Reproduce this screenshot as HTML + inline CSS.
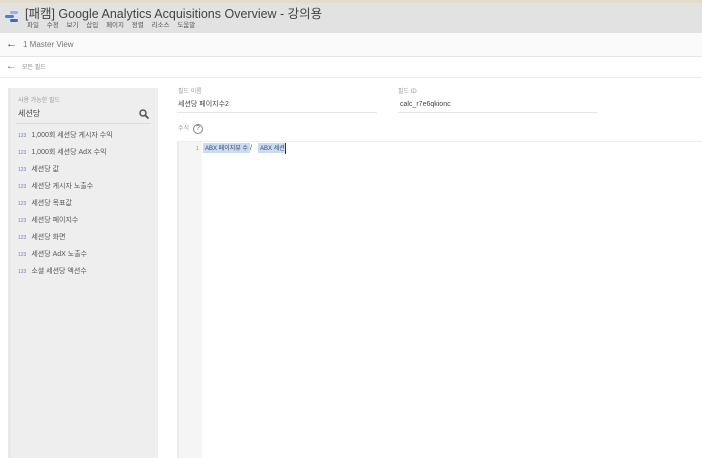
<!DOCTYPE html>
<html><head><meta charset="utf-8"><style>
*{margin:0;padding:0;box-sizing:border-box}
body{width:702px;height:458px;overflow:hidden;background:#fff;font-family:"Liberation Sans","Noto Sans CJK KR",sans-serif;position:relative;color:#333}
.a{position:absolute;white-space:nowrap;line-height:1}
.f{font-size:7px;color:#555}
.f b{font-weight:normal;color:#6b7fc0;font-size:5px;margin-right:5px}
</style></head><body>
<div class="a" style="left:0;top:0;width:702px;height:3px;background:#e4dccb"></div>
<div class="a" style="left:0;top:3px;width:702px;height:30px;background:#e2e2e2"></div>
<svg class="a" style="left:5px;top:11px" width="14" height="12"><rect x="5" y="0" width="8" height="3" rx="1.5" fill="#8ab4f8"/><rect x="0" y="4" width="9" height="3" rx="1.5" fill="#4a7ed8"/><rect x="5" y="8" width="8" height="3" rx="1.5" fill="#3b6cc4"/></svg>
<div class="a" style="left:25px;top:8px;font-size:12.5px;color:#444">[패캠] Google Analytics Acquisitions Overview - 강의용</div>
<div class="a" style="left:27px;top:23px;font-size:6.5px;color:#555;word-spacing:6px">파일 수정 보기 삽입 페이지 정렬 리소스 도움말</div>
<div class="a" style="left:628px;top:32px;font-size:8px;color:#888">····</div>
<div class="a" style="left:0;top:33px;width:702px;height:24px;background:#fafafa;border-bottom:1px solid #e6e6e6"></div>
<div class="a" style="left:6px;top:39px;font-size:11px;color:#444">←</div>
<div class="a" style="left:23px;top:41px;font-size:8px;color:#777">1 Master View</div>
<div class="a" style="left:0;top:57px;width:702px;height:21px;border-bottom:1px solid #ececec"></div>
<div class="a" style="left:6px;top:62px;font-size:10px;color:#666">←</div>
<div class="a" style="left:22px;top:65px;font-size:6px;color:#888">모든 필드</div>
<div class="a" style="left:8px;top:88px;width:150px;height:370px;background:#eeeeee;border-left:3px solid #e8e8e8"></div>
<div class="a" style="left:18px;top:98px;font-size:6px;color:#999">사용 가능한 필드</div>
<div class="a" style="left:18px;top:110px;font-size:8px;color:#444">세션당</div>
<svg class="a" style="left:139px;top:109px" width="10" height="10"><circle cx="4" cy="4" r="3" stroke="#555" stroke-width="1.5" fill="none"/><path d="M6.2 6.2L9.5 9.5" stroke="#555" stroke-width="1.8"/></svg>
<div class="a" style="left:16px;top:123px;width:135px;height:1px;background:#ddd"></div>
<div class="a f" style="left:18px;top:132px"><b>123</b>1,000회 세션당 게시자 수익</div>
<div class="a f" style="left:18px;top:149px"><b>123</b>1,000회 세션당 AdX 수익</div>
<div class="a f" style="left:18px;top:166px"><b>123</b>세션당 값</div>
<div class="a f" style="left:18px;top:183px"><b>123</b>세션당 게시자 노출수</div>
<div class="a f" style="left:18px;top:200px"><b>123</b>세션당 목표값</div>
<div class="a f" style="left:18px;top:217px"><b>123</b>세션당 페이지수</div>
<div class="a f" style="left:18px;top:234px"><b>123</b>세션당 화면</div>
<div class="a f" style="left:18px;top:251px"><b>123</b>세션당 AdX 노출수</div>
<div class="a f" style="left:18px;top:268px"><b>123</b>소셜 세션당 액션수</div>
<div class="a" style="left:178px;top:89px;font-size:6px;color:#999">필드 이름</div>
<div class="a" style="left:178px;top:101px;font-size:7px;color:#444">세션당 페이지수2</div>
<div class="a" style="left:177px;top:112px;width:200px;height:1px;background:#e6e6e6"></div>
<div class="a" style="left:398px;top:89px;font-size:6px;color:#999">필드 ID</div>
<div class="a" style="left:400px;top:101px;font-size:7px;color:#444">calc_r7e6qkionc</div>
<div class="a" style="left:398px;top:112px;width:200px;height:1px;background:#e6e6e6"></div>
<div class="a" style="left:178px;top:126px;font-size:6px;color:#999">수식</div>
<div class="a" style="left:193px;top:124px;width:10px;height:10px;border:1px solid #888;border-radius:50%;font-size:7px;line-height:8px;text-align:center;color:#666">?</div>
<div class="a" style="left:177px;top:141px;width:525px;height:1px;background:#eee"></div>
<div class="a" style="left:177px;top:142px;width:25px;height:316px;background:#f5f5f5;border-left:2px solid #ececec"></div>
<div class="a" style="left:196px;top:147px;font-size:5px;color:#888">1</div>
<div class="a" style="left:203px;top:143px;width:47px;height:10px;background:#c9dcf5"></div>
<div class="a" style="left:205px;top:146px;font-size:6px;color:#445">ABX 페이지뷰 수</div>
<div class="a" style="left:250px;top:145px;font-size:7px;color:#444">/</div>
<div class="a" style="left:258px;top:143px;width:27px;height:10px;background:#c9dcf5"></div>
<div class="a" style="left:260px;top:146px;font-size:6px;color:#445">ABX 세션</div>
<div class="a" style="left:285px;top:143px;width:1px;height:11px;background:#333"></div>
</body></html>
